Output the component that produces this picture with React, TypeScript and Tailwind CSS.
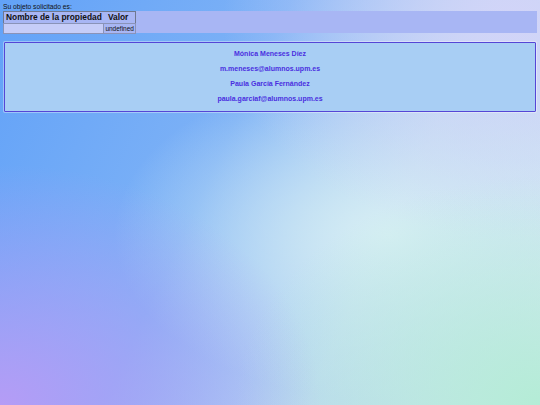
import React from "react";

const authors = [
  "Mónica Meneses Díez",
  "m.meneses@alumnos.upm.es",
  "Paula García Fernández",
  "paula.garciaf@alumnos.upm.es",
];

const App: React.FC = () => {
  return (
    <div className="min-h-screen w-full font-['Liberation_Sans',Arial,sans-serif] bg-[radial-gradient(ellipse_at_0%_100%,#b59cf6_0%,rgba(181,156,246,0)_42%),radial-gradient(ellipse_at_100%_100%,#b4ecd6_0%,rgba(180,236,214,0)_40%),radial-gradient(ellipse_at_95%_5%,#d2d4f8_0%,rgba(210,212,248,0)_40%),radial-gradient(ellipse_at_72%_58%,#d6eef4_0%,rgba(214,238,244,0)_50%),linear-gradient(115deg,#62a2f8_0%,#7eb2f6_40%,#bcd8f2_68%,#d4e8f4_100%)]">
      <div className="px-[3px] pt-[2px]">
        <p className="text-[6.7px] leading-[9px] text-[#111]">Su objeto solicitado es:</p>
        <div className="bg-[#a8b6f4] h-[22px] w-[534px]">
          <table className="border border-[#6f7890] border-collapse text-[#111]">
            <thead>
              <tr>
                <th className="text-[8.4px] leading-[11px] font-bold pl-[2px] pr-[2px] text-left">Nombre de la propiedad</th>
                <th className="text-[8.4px] leading-[11px] font-bold pl-[4px] pr-[4px] text-left">Valor</th>
              </tr>
            </thead>
            <tbody>
              <tr>
                <td className="border border-[#8a93b8] bg-[#c6cdf8] h-[10px]"></td>
                <td className="border border-[#8a93b8] text-[6.5px] leading-[9px] text-right px-[1px]">undefined</td>
              </tr>
            </tbody>
          </table>
        </div>
      </div>
      <div className="mx-[4px] mt-[9px] border-[1.5px] border-[#5546d6] rounded-[1px] bg-[#a8cef4] shadow-[0_0_0_1px_rgba(255,255,255,0.35)] py-[7px] flex flex-col items-center gap-[6.5px]">
        {authors.map((line) => (
          <p key={line} className="text-[7px] leading-[8.5px] font-bold text-[#4a2ee0]">
            {line}
          </p>
        ))}
      </div>
    </div>
  );
};

export default App;
